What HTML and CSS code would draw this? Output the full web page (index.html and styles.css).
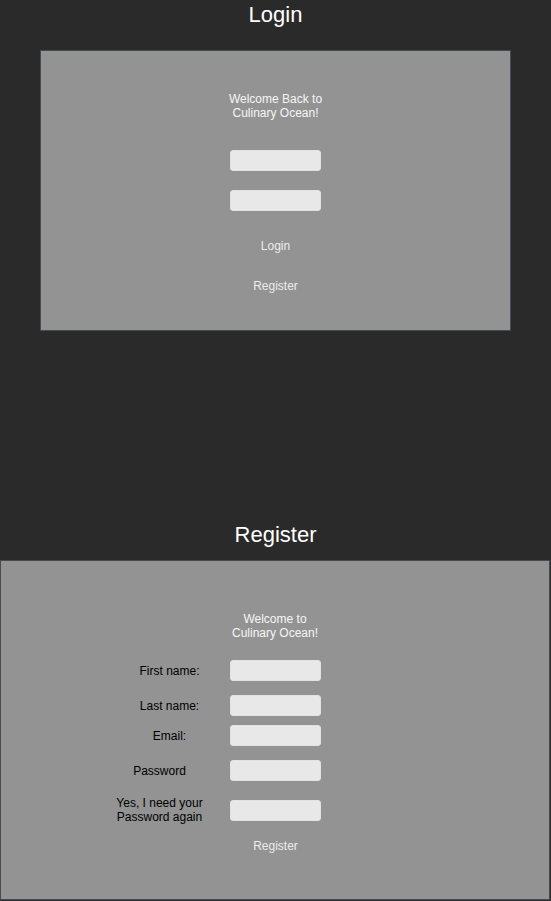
FILE: index.html
```html
<!DOCTYPE html>
<html>
<head>
<meta charset="utf-8">
<link rel="stylesheet" href="styles.css">
</head>
<body>
  <section class="login-section">
    <h2 class="title">Login</h2>
    <div class="card login-card">
      <p class="welcome">Welcome Back to<br>Culinary Ocean!</p>
      <input class="field first" type="text">
      <input class="field second" type="password">
      <div class="link login-link">Login</div>
      <div class="link register-link">Register</div>
    </div>
  </section>
  <section class="register-section">
    <h2 class="title">Register</h2>
    <div class="card register-card">
      <p class="welcome">Welcome to<br>Culinary Ocean!</p>
      <div class="row r1"><label class="lbl">First name:</label><input class="field" type="text"></div>
      <div class="row r2"><label class="lbl">Last name:</label><input class="field" type="text"></div>
      <div class="row r3"><label class="lbl">Email:</label><input class="field" type="text"></div>
      <div class="row r4"><label class="lbl shift">Password</label><input class="field" type="password"></div>
      <div class="row r5"><label class="lbl shift">Yes, I need your<br>Password again</label><input class="field" type="password"></div>
      <div class="link reg-submit">Register</div>
    </div>
  </section>
</body>
</html>
```

FILE: styles.css
```css
html, body {
  margin: 0;
  padding: 0;
  background: #2a2a2a;
  font-family: "Liberation Sans", Arial, sans-serif;
}

.title {
  margin: 0;
  font-size: 22px;
  font-weight: normal;
  line-height: 30px;
  color: #ffffff;
  text-align: center;
}

.card {
  box-sizing: border-box;
  background: #939393;
  border: 1px solid #464a52;
  display: flex;
  flex-direction: column;
  align-items: center;
}

.login-card {
  width: 471px;
  height: 281px;
  margin: 20px 40px 0 40px;
  padding-top: 41px;
}

.welcome {
  margin: 0;
  font-size: 12px;
  line-height: 14px;
  color: #f6f6f6;
  text-align: center;
}

.field {
  box-sizing: border-box;
  width: 91px;
  height: 21px;
  margin: 0;
  padding: 0;
  background: #e8e8e8;
  border: 1px solid #e2e2e2;
  border-radius: 3px;
  outline: none;
}

.login-card .first { margin-top: 30px; }
.login-card .second { margin-top: 19px; }

.link {
  font-size: 12px;
  line-height: 14px;
  color: #ececec;
  text-align: center;
}

.login-link { margin-top: 28px; }
.register-link { margin-top: 26px; }

.register-section {
  margin-top: 189px;
}

.register-card {
  width: 550px;
  height: 340px;
  margin-top: 10px;
  padding-top: 51px;
  align-items: stretch;
}

.row {
  display: grid;
  grid-template-columns: 1fr 91px 1fr;
  align-items: center;
}

.row .lbl {
  grid-column: 1;
  justify-self: end;
  box-sizing: border-box;
  width: 100px;
  margin-right: 10px;
  font-size: 12px;
  line-height: 14px;
  color: #000000;
  text-align: center;
  white-space: nowrap;
}

.row .lbl.shift {
  margin-right: 20px;
}

.row .field { grid-column: 2; }

.r1 { margin-top: 20px; }
.r2 { margin-top: 14px; }
.r3 { margin-top: 9px; }
.r4 { margin-top: 14px; }
.r5 { margin-top: 15px; }

.reg-submit {
  margin-top: 15px;
  padding-left: 1px;
}
```
